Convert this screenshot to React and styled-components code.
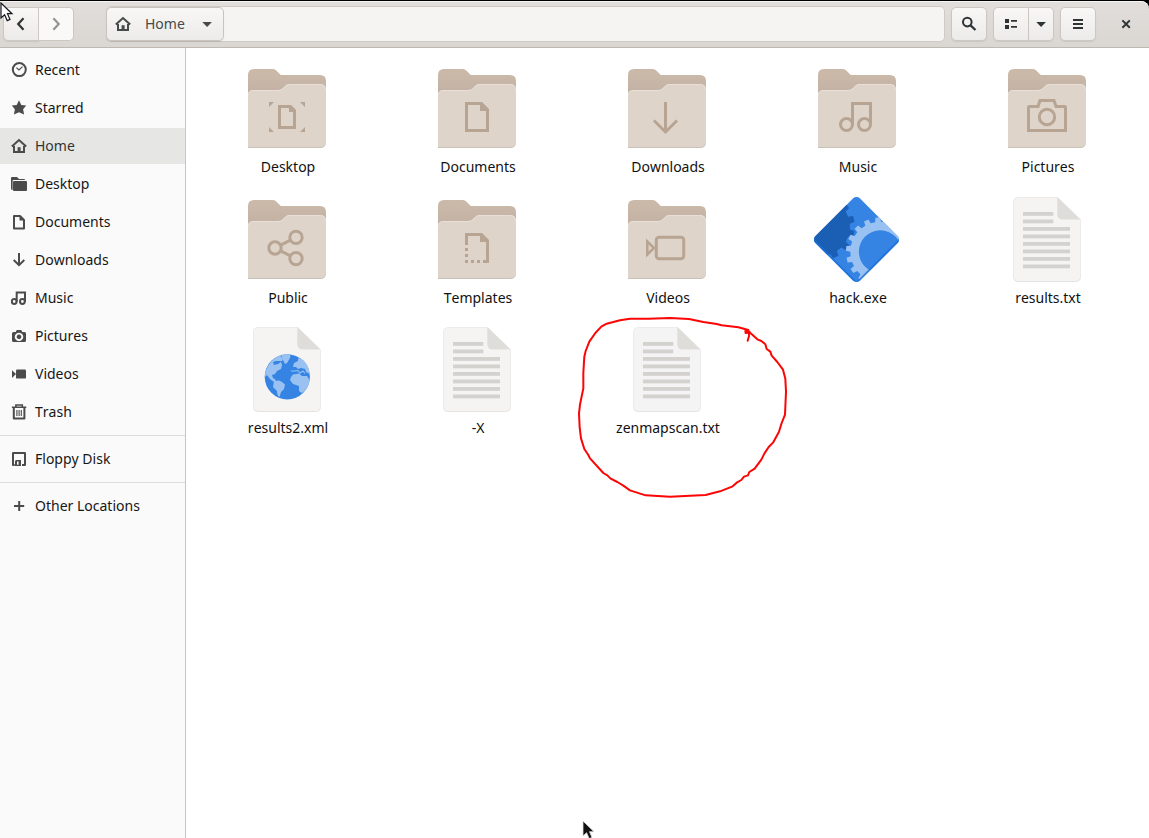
import React from "react";
import styled, { createGlobalStyle } from "styled-components";

const GlobalStyle = createGlobalStyle`
  * { box-sizing: border-box; }
  body {
    margin: 0;
    background: #000;
    overflow: hidden;
    font-family: "Noto Sans", "Open Sans", sans-serif;
    font-size: 14px;
    font-kerning: none;
    color: #111;
  }
  svg { display: block; }
`;

const Window = styled.div`
  position: relative;
  width: 1149px;
  height: 838px;
  padding-top: 1px;
  display: flex;
  flex-direction: column;
  background: #000;
  overflow: hidden;
`;

const HeaderBar = styled.header`
  flex: none;
  height: 47px;
  display: flex;
  align-items: center;
  padding: 0 4px 1px 3px;
  background: linear-gradient(#e1dedb, #dad6d2);
  border-bottom: 1px solid #bfb8b1;
  box-shadow: inset 0 1px #f6f5f4;
  border-radius: 0 8px 0 0;
`;

const ButtonGroup = styled.div`
  display: flex;
  margin-right: ${(p) => p.$after || 0}px;
`;

const Button = styled.button`
  width: ${(p) => p.$width || 36}px;
  height: 34px;
  padding: 0;
  display: flex;
  align-items: center;
  justify-content: center;
  color: ${(p) => (p.$muted ? "#929595" : "#2e3436")};
  background: ${(p) => (p.$muted ? "#faf9f8" : "linear-gradient(#f8f7f6, #edebe9)")};
  border: 1px solid #cdc7c2;
  border-radius: 5px;
  box-shadow: ${(p) => (p.$muted ? "none" : "0 1px 1px rgba(0, 0, 0, 0.08)")};

  ${ButtonGroup} &:not(:first-child) {
    border-top-left-radius: 0;
    border-bottom-left-radius: 0;
    border-left: 0;
  }
  ${ButtonGroup} &:not(:last-child) {
    border-top-right-radius: 0;
    border-bottom-right-radius: 0;
  }
`;

const PathBar = styled.div`
  width: 839px;
  height: 36px;
  display: flex;
  align-items: center;
  margin-right: 6px;
  background: #f5f4f2;
  border: 1px solid #d0cac5;
  border-radius: 5px;
`;

const PathButton = styled.button`
  width: 118px;
  height: 34px;
  margin-left: -1px;
  padding: 0 8px 0 8px;
  display: flex;
  align-items: center;
  font: inherit;
  font-kerning: none;
  color: #454a4b;
  background: linear-gradient(#f8f7f6, #edebe9);
  border: 1px solid #c9c3be;
  border-radius: 5px;
  box-shadow: 0 1px 1px rgba(0, 0, 0, 0.1);
`;

const PathName = styled.span`
  flex: 1;
  padding-left: 14px;
  text-align: left;
`;

const CloseButton = styled.button`
  width: 34px;
  height: 34px;
  padding: 0;
  margin-left: auto;
  margin-right: 2px;
  display: flex;
  align-items: center;
  justify-content: center;
  color: #2e3436;
  background: none;
  border: 0;
`;

const Body = styled.div`
  flex: 1;
  display: flex;
  min-height: 0;
`;

const Sidebar = styled.nav`
  width: 186px;
  padding-top: 4px;
  background: #fafafa;
  border-right: 1px solid #c9c6c2;
`;

const Place = styled.div`
  height: 36px;
  margin-bottom: 2px;
  padding-left: 11px;
  display: flex;
  align-items: center;
  gap: 8px;
  color: ${(p) => (p.$active ? "#303536" : "#161616")};
  background: ${(p) => (p.$active ? "#e6e6e5" : "transparent")};

  svg { color: #4b4b4b; }
`;

const PlaceName = styled.span`
  line-height: 20px;
`;

const Divider = styled.hr`
  height: 1px;
  margin: 5px 0;
  border: 0;
  background: #dcdcda;
`;

const Files = styled.main`
  flex: 1;
  display: grid;
  grid-template-columns: repeat(5, 190px);
  grid-template-rows: 131px 130px 130px;
  padding: 13px 0 0 6px;
  background: #fff;
`;

const File = styled.figure`
  margin: 0;
  display: flex;
  flex-direction: column;
  align-items: center;
`;

const FileName = styled.figcaption`
  height: 20px;
  line-height: 20px;
  padding-left: 2px;
`;

const Overlay = styled.svg`
  position: absolute;
  left: ${(p) => p.$x}px;
  top: ${(p) => p.$y}px;
  pointer-events: none;
`;

const Icon16 = ({ children }) => (
  <svg width="16" height="16" viewBox="0 0 16 16" fill="currentColor">{children}</svg>
);
const line = { fill: "none", stroke: "currentColor", strokeWidth: 2 };

const glyphs = {
  recent: (
    <>
      <circle cx="8.3" cy="7.6" r="6.5" {...line} />
      <path d="M5.4 5.6 8 8 11.5 4.6" {...line} strokeWidth="1.2" />
    </>
  ),
  star: <path d="M8 .3 10.3 4.9 15.2 5.5 12.1 9.2 13.1 14.6 8 12.2 2.9 14.6 3.9 9.2.8 5.5 5.7 4.9Z" />,
  home: (
    <>
      <path d="M.8 8.6 8 2.1 15.2 8.6" {...line} />
      <path d="M3 8v6h10V8" {...line} />
      <path d="M6.6 9.2h3V15h-3z" />
    </>
  ),
  desktop: (
    <>
      <path d="M0 2Q0 1 1 1H6L8 3H13Q14 3 14 4H2.5Q1.6 4 1.6 5V14Q0 14 0 12.5Z" />
      <path d="M3 5H15Q16 5 16 6V14Q16 15 15 15H3Q2 15 2 14V6Q2 5 3 5Z" />
    </>
  ),
  documents: (
    <>
      <path d="M3 2H9L13 6V14.4H3Z" {...line} strokeLinejoin="round" />
      <path d="M8.5 2V6.5H13Z" />
    </>
  ),
  downloads: <path d="M8 1V13M2.7 8 8 13.2 13.3 8" {...line} />,
  music: (
    <>
      <circle cx="3.2" cy="11.5" r="2.4" {...line} />
      <circle cx="11.4" cy="11.5" r="2.4" {...line} />
      <path d="M5.7 11.5V2.5H14V11.5" {...line} />
    </>
  ),
  pictures: (
    <path
      fillRule="evenodd"
      d="M2.5 4H4.8L5.7 2H10.3L11.2 4H13.5Q15 4 15 5.5V12.5Q15 14 13.5 14H2.5Q1 14 1 12.5V5.5Q1 4 2.5 4ZM8 4.7a4.2 4.2 0 1 0 .01 0ZM8 6.6a2.3 2.3 0 1 1-.01 0Z"
    />
  ),
  videos: (
    <>
      <rect x="5" y="3.6" width="10" height="9" rx="1.2" />
      <path d="M1 4.2 5 8.1 1 12Z" />
    </>
  ),
  trash: (
    <>
      <path d="M.9 3.2H15.3M4.9 2.8V1H11.3V2.8" {...line} strokeWidth="1.6" />
      <path d="M2.8 4V14.4H13.4V4" {...line} strokeLinejoin="round" />
      <path d="M5.9 6V12M8.1 6V12M10.3 6V12" {...line} strokeWidth="1.1" />
    </>
  ),
  floppy: (
    <>
      <path d="M3.7 14H2V2H14V14H11" {...line} strokeLinejoin="round" />
      <path fillRule="evenodd" d="M5 9H10V15H4V10ZM6 10.5V13.8H7.6V10.5Z" />
    </>
  ),
  plus: <path d="M8.2 3V13M3 8H13.2" {...line} />,
  back: <path d="M10.5 2.2 5.2 8 10.5 13.8" {...line} strokeWidth="2.2" />,
  forward: <path d="M5.4 2.2 10.7 8 5.4 13.8" {...line} strokeWidth="2.2" />,
  search: (
    <>
      <circle cx="6.3" cy="6.1" r="4.3" {...line} />
      <path d="M9.3 9.1 14.5 14" {...line} strokeWidth="2.3" />
    </>
  ),
  list: <path d="M2 3h4v4H2zM8 4h6v1.8H8zM2 9h4v4H2zM8 10h6v1.8H8z" />,
  down: <path d="M3.3 6H12.9L8.1 11Z" />,
  menu: <path d="M3 3h10v2H3zM3 7h10v2H3zM3 11h10v2H3z" />,
  close: <path d="M4.4 4.4 11.8 11.8M11.8 4.4 4.4 11.8" {...line} />,
};

const Glyph = ({ name }) => <Icon16>{glyphs[name]}</Icon16>;

const emblems = {
  desktop: (
    <>
      <path d="M40.5 45.5H51.5L55.5 49.5V66.5H40.5Z" />
      <path d="M50 44V51H57L51 45Z" fill="#b8a492" stroke="none" />
      <path d="M30 41h5l-5 5zM66 41h-5l5 5zM30 71h5l-5-5zM66 71h-5l5-5z" fill="#b8a492" stroke="none" />
    </>
  ),
  documents: (
    <>
      <path d="M37.5 42.5H52.4L58.5 48.6V69.5H37.5Z" />
      <path d="M51 42V50H59Z" fill="#b8a492" stroke="none" />
    </>
  ),
  downloads: <path d="M46.5 41V71M35 59.5 46.5 71 58 59.5" />,
  music: (
    <>
      <circle cx="37.5" cy="63.5" r="6" />
      <circle cx="55.5" cy="63.5" r="6" />
      <path d="M43.5 63.5V42.5H61.5V63.5" />
    </>
  ),
  pictures: (
    <>
      <path d="M30.5 45.5H39L41 39.5H55L57 45.5H65.5Q66.5 45.5 66.5 46.5V69.5H29.5V46.5Q29.5 45.5 30.5 45.5Z" />
      <circle cx="48" cy="56" r="7.7" />
    </>
  ),
  public: (
    <>
      <circle cx="36" cy="56" r="6.2" />
      <circle cx="57" cy="45.4" r="6.2" />
      <circle cx="57" cy="66.6" r="6.2" />
      <path d="M41.5 53.2 51.5 48.2M41.5 58.8 51.5 63.8" />
    </>
  ),
  templates: (
    <>
      <path d="M37.5 53V42.5H52.4L58.5 48.6V69.5H54" />
      <path d="M51 42V50H59Z" fill="#b8a492" stroke="none" />
      <path d="M36 56h3v3h-3zM36 62h3v3h-3zM36 68h3v3h-3zM42 68h3v3h-3zM48 68h3v3h-3z" fill="#b8a492" stroke="none" />
    </>
  ),
  videos: (
    <>
      <rect x="37.3" y="45.3" width="27.4" height="21.4" rx="2.7" />
      <path d="M28.3 49.5V62.5L35 56Z" strokeWidth="2.6" />
    </>
  ),
};

const FolderIcon = ({ emblem }) => (
  <svg width="96" height="96" viewBox="0 0 96 96">
    <defs>
      <linearGradient id={`shade-${emblem}`} x1="0" y1="0" x2="0" y2="1">
        <stop offset="0.1" stopColor="#cab9a9" />
        <stop offset="0.4" stopColor="#c4b3a4" />
      </linearGradient>
    </defs>
    <path
      d="M9 14Q9 8 15 8H34Q36 8 37.5 9.7L41.8 14H81Q87 14 87 20V60H9Z"
      fill={`url(#shade-${emblem})`}
    />
    <path d="M9 34Q9 29 15 29H39Q42 29 43.5 27.5L46 25Q48 23 50 23H81Q87 23 87 29V81Q87 87 81 87H9Z" fill="#c9c0b8" />
    <path d="M9 34Q9 29 15 29H39Q42 29 43.5 27.5L46 25Q48 23 50 23H81Q87 23 87 29V80Q87 86 81 86H9Z" fill="#ded4ca" />
    <path d="M9.5 34Q9.5 29.5 15 29.5H39Q42 29.5 43.8 27.8L46.3 25.3Q48 23.5 50 23.5H81Q86.5 23.5 86.5 29" fill="none" stroke="#e7dfd8" />
    <g fill="none" stroke="#b8a492" strokeWidth="3">{emblems[emblem]}</g>
  </svg>
);

const Sheet = ({ children, plain }) => (
  <svg width="96" height="96" viewBox="0 0 96 96">
    <path d="M20 5H58.5L82 28V84Q82 90 76 90H20Q14 90 14 84V11Q14 5 20 5Z" fill={plain ? "#e4e4e4" : "#e5e3e1"} />
    <path d="M20 5.4H58.5L81.5 28V83Q81.5 89 76 89H20Q14.5 89 14.5 83V11Q14.5 5.4 20 5.4Z" fill={plain ? "#f4f4f4" : "#f5f4f3"} />
    <path d="M58.3 5 81.5 27.6H64Q58.3 27.6 58.3 22Z" fill="#deddda" />
    {children}
  </svg>
);

const TextIcon = ({ plain }) => (
  <Sheet plain={plain}>
    {Array.from({ length: 8 }, (_, i) => (
      <rect key={i} x="24" y={20 + i * 7.5} width={i < 2 ? 30.3 : 47} height="3.8" fill="#d3d2cf" />
    ))}
  </Sheet>
);

const GlobeIcon = () => (
  <Sheet>
    <circle cx="48.3" cy="54.8" r="22.6" fill="#3584e4" />
    <g fill="#99c1f1">
      <path d="M28 46Q32 37 41 33.5L44 37 43 39 37 39 34 40 35 43 39 42 42 40 43 43 42 47 38 49 36 52 33 53 34 56 37 58 35 60 31 57 28 53 26 55Q26 49 28 46Z" />
      <path d="M42 32.8Q47 31.7 51.5 32.5L51 36 48 41 46 42 44 38Z" />
      <path d="M35 59 40 58.5 43 60 46 62.5 45 67 42 70 40.5 75Q38 74 38 69L34 65Z" />
      <path d="M54 45 55 41 59 39 59 36.5 61.5 36Q69.5 41 70.8 52L67 50 66 47 62 46 59 47 57 45Z" />
      <path d="M54 52.5 60 51.5 63 54 68 54 70.5 58Q70 64 65 69.5L62.5 71 60 69 60 64 54 62 51 58 52 55Z" />
    </g>
    <path d="M52 49 56 49 59 48.5 61 51 64 49 66 51.5" fill="none" stroke="#99c1f1" strokeWidth="1.1" />
  </Sheet>
);

const gearPath = (cx, cy, inner, outer, teeth, turn) => {
  const step = (Math.PI * 2) / teeth;
  const at = (r, a) => `${(cx + r * Math.cos(a)).toFixed(2)} ${(cy + r * Math.sin(a)).toFixed(2)}`;
  return (
    Array.from({ length: teeth }, (_, i) => {
      const a = i * step + turn;
      return `${i ? "L" : "M"}${at(inner, a - step * 0.28)}L${at(outer, a - step * 0.2)}L${at(outer, a + step * 0.2)}L${at(inner, a + step * 0.28)}`;
    }).join("") + "Z"
  );
};

const ExecutableIcon = () => (
  <svg width="96" height="96" viewBox="0 0 96 96">
    <defs>
      <clipPath id="diamond">
        <rect x="16" y="16" width="63" height="63" rx="5" transform="rotate(45 47.5 47.5)" />
      </clipPath>
    </defs>
    <g clipPath="url(#diamond)">
      <path d="M0 0H96V96H0Z" fill="#3584e4" />
      <path d={gearPath(12, 34.7, 29, 33.8, 14, 0.22)} fill="#1a5fb4" />
      <path d={gearPath(71.3, 59.7, 30, 34.4, 18, 0.1)} fill="#99c1f1" />
      <circle cx="71.3" cy="59.7" r="21.4" fill="#3584e4" />
      <path d="M4 48 47.5 91.8 91 48" fill="none" stroke="#1c71d8" strokeWidth="3" opacity=".8" />
    </g>
  </svg>
);

const places = [
  ["recent", "Recent"],
  ["star", "Starred"],
  ["home", "Home"],
  ["desktop", "Desktop"],
  ["documents", "Documents"],
  ["downloads", "Downloads"],
  ["music", "Music"],
  ["pictures", "Pictures"],
  ["videos", "Videos"],
  ["trash", "Trash"],
];

const folders = ["Desktop", "Documents", "Downloads", "Music", "Pictures", "Public", "Templates", "Videos"];

const files = [
  ...folders.map((name) => ({ name, icon: <FolderIcon emblem={name.toLowerCase()} /> })),
  { name: "hack.exe", icon: <ExecutableIcon /> },
  { name: "results.txt", icon: <TextIcon /> },
  { name: "results2.xml", icon: <GlobeIcon /> },
  { name: "-X", icon: <TextIcon /> },
  { name: "zenmapscan.txt", icon: <TextIcon plain /> },
];

const Pointer = ({ x, y, dark }) => (
  <Overlay $x={x} $y={y} width="16" height="22" viewBox="0 0 16 22">
    <path
      d="M1 1V16L4.6 12.7 7.2 18.6 10 17.4 7.5 11.7H12Z"
      fill={dark ? "#111" : "#fff"}
      stroke={dark ? "#ddd" : "#15171f"}
      strokeWidth={dark ? 0.8 : 1.2}
    />
  </Overlay>
);

const MarkerCircle = () => (
  <Overlay $x={570} $y={310} width="230" height="200" viewBox="0 0 690 600">
    <path
      d="M533 92 537 78 536 63 526 63 527 69 540 67M535 60 505 52 455 46 440 42 400 36 357 27 300 24 235 26 180 26 150 31 110 41 94 50 76 69 58 95 47 123 43 140 40 188 40 235 34 264 30 284 27 310 29 352 33 385 43 417 55 435 60 445 100 489 112 496 122 506 142 516 160 527 180 541 227 556 300 560 360 557 407 555 450 544 488 529 500 518 514 510 522 500 534 496 538 486 554 476 574 449 583 431 596 411 609 398 627 365 634 342 645 314 648 245 646 206 639 179 622 156 605 137 601 125 590 117 586 103 574 93 562 88 548 75 538 67"
      fill="none"
      stroke="#fb0505"
      strokeWidth="6"
      strokeLinejoin="round"
      strokeLinecap="round"
    />
  </Overlay>
);

export default function App() {
  return (
    <Window>
      <GlobalStyle />
      <HeaderBar>
        <ButtonGroup $after={32}>
          <Button><Glyph name="back" /></Button>
          <Button $width={35} $muted><Glyph name="forward" /></Button>
        </ButtonGroup>
        <PathBar>
          <PathButton>
            <Glyph name="home" />
            <PathName>Home</PathName>
            <Glyph name="down" />
          </PathButton>
        </PathBar>
        <ButtonGroup $after={6}>
          <Button><Glyph name="search" /></Button>
        </ButtonGroup>
        <ButtonGroup $after={6}>
          <Button><Glyph name="list" /></Button>
          <Button $width={25}><Glyph name="down" /></Button>
        </ButtonGroup>
        <ButtonGroup>
          <Button><Glyph name="menu" /></Button>
        </ButtonGroup>
        <CloseButton><Glyph name="close" /></CloseButton>
      </HeaderBar>
      <Body>
        <Sidebar>
          {places.map(([icon, label]) => (
            <Place key={label} $active={icon === "home"}>
              <Glyph name={icon} />
              <PlaceName>{label}</PlaceName>
            </Place>
          ))}
          <Divider />
          <Place>
            <Glyph name="floppy" />
            <PlaceName>Floppy Disk</PlaceName>
          </Place>
          <Divider />
          <Place>
            <Glyph name="plus" />
            <PlaceName>Other Locations</PlaceName>
          </Place>
        </Sidebar>
        <Files>
          {files.map(({ name, icon }) => (
            <File key={name}>
              {icon}
              <FileName>{name}</FileName>
            </File>
          ))}
        </Files>
      </Body>
      <MarkerCircle />
      <Pointer x={0} y={2} />
      <Pointer x={582} y={820} dark />
    </Window>
  );
}
